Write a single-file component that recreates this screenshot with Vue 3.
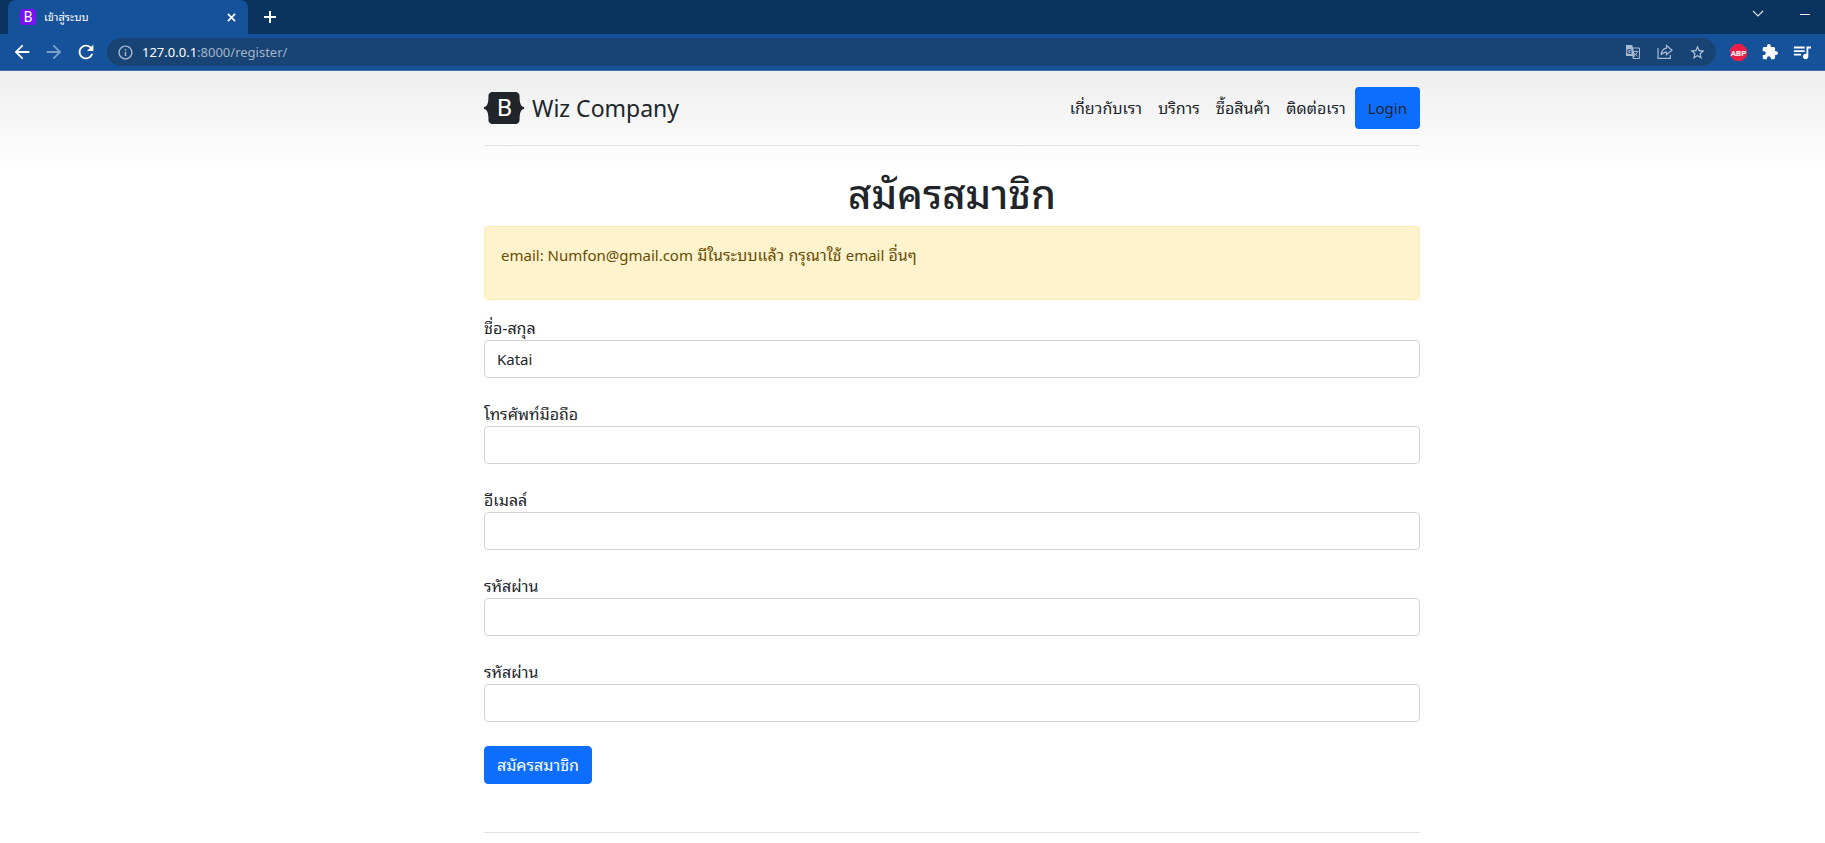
<script setup>
import { ref } from 'vue'

const links = ['เกี่ยวกับเรา', 'บริการ', 'ซื้อสินค้า', 'ติดต่อเรา']

const fields = ref([
  { id: 'name', label: 'ชื่อ-สกุล', type: 'text', value: 'Katai' },
  { id: 'phone', label: 'โทรศัพท์มือถือ', type: 'text', value: '' },
  { id: 'email', label: 'อีเมลล์', type: 'email', value: '' },
  { id: 'password', label: 'รหัสผ่าน', type: 'password', value: '' },
  { id: 'password2', label: 'รหัสผ่าน', type: 'password', value: '' },
])
</script>

<template>
  <div class="browser">
    <div class="tabstrip">
      <div class="tab">
        <span class="favicon">B</span>
        <span class="tab-title">เข้าสู่ระบบ</span>
        <button class="icon-btn close" aria-label="Close tab">
          <svg width="9" height="9" viewBox="0 0 10 10"><path d="M1 1l8 8M9 1l-8 8" stroke="#fff" stroke-width="1.8" /></svg>
        </button>
      </div>
      <button class="icon-btn new-tab" aria-label="New tab">
        <svg width="12" height="12" viewBox="0 0 12 12"><path d="M6 0v12M0 6h12" stroke="#fff" stroke-width="2" /></svg>
      </button>
      <div class="window-controls">
        <button class="icon-btn" aria-label="Search tabs">
          <svg width="12" height="8" viewBox="0 0 12 8"><path d="M1 1l5 5 5-5" fill="none" stroke="#dbe4ef" stroke-width="1.2" /></svg>
        </button>
        <button class="icon-btn" aria-label="Minimize">
          <svg width="10" height="8" viewBox="0 0 10 8"><path d="M0 4.5h10" stroke="#fff" /></svg>
        </button>
      </div>
    </div>

    <div class="toolbar">
      <div class="nav-buttons">
        <button class="icon-btn" aria-label="Back">
          <svg width="22" height="22" viewBox="0 0 24 24" fill="#fff"><path d="M20 11H7.830l5.590-5.590L12 4l-8 8 8 8 1.410-1.410L7.830 13H20v-2z" /></svg>
        </button>
        <button class="icon-btn" aria-label="Forward">
          <svg width="22" height="22" viewBox="0 0 24 24" fill="#7ba1cd"><path d="M12 4l-1.410 1.410L16.170 11H4v2h12.170l-5.580 5.590L12 20l8-8z" /></svg>
        </button>
        <button class="icon-btn" aria-label="Reload">
          <svg width="22" height="22" viewBox="0 0 24 24" fill="#fff"><path d="M17.650 6.350C16.200 4.900 14.210 4 12 4c-4.420 0-7.990 3.580-7.990 8s3.570 8 7.990 8c3.730 0 6.840-2.550 7.730-6h-2.080c-.820 2.330-3.040 4-5.650 4-3.310 0-6-2.690-6-6s2.690-6 6-6c1.660 0 3.140.690 4.220 1.780L13 11h7V4l-2.350 2.350z" /></svg>
        </button>
      </div>
      <div class="address">
        <svg width="17" height="17" viewBox="0 0 24 24" fill="#a9bbd0"><path d="M11 7h2v2h-2zm0 4h2v6h-2zm1-9C6.480 2 2 6.480 2 12s4.480 10 10 10 10-4.480 10-10S17.520 2 12 2zm0 18c-4.410 0-8-3.590-8-8s3.590-8 8-8 8 3.590 8 8-3.590 8-8 8z" /></svg>
        <span class="url"><b>127.0.0.1</b>:8000/register/</span>
        <div class="address-actions">
          <button class="icon-btn" aria-label="Translate">
            <svg width="16" height="16" viewBox="0 0 16 16">
              <path d="M7 4h7.500v10.500H8" fill="none" stroke="#a9bbd0" />
              <path d="M8.500 7.500h5M11 6.500v1M12.500 7.500c-.5 2-2 3.500-3.500 4.500M9.500 9l3 3.500" fill="none" stroke="#a9bbd0" stroke-width=".9" />
              <path d="M1 1h6.200l2.800 11H1z" fill="#a9bbd0" />
              <path d="M7.500 12v3l2.500-3z" fill="#a9bbd0" />
              <text x="1.500" y="9.500" class="translate-letter">G</text>
            </svg>
          </button>
          <button class="icon-btn" aria-label="Share">
            <svg width="16" height="16" viewBox="0 0 16 16" fill="none" stroke="#a9bbd0" stroke-width="1.200">
              <path d="M1 4v10.400h12.400V11" />
              <path d="M9.500 1.500l5.500 4.700-5.500 4.600V8.200C6.800 8.200 5.200 9.200 4 11c.3-3.600 2.200-6.400 5.500-6.900z" />
            </svg>
          </button>
          <button class="icon-btn" aria-label="Bookmark">
            <svg width="17" height="17" viewBox="0 0 24 24" fill="#b7c6d8"><path d="M22 9.240l-7.190-.620L12 2 9.190 8.630 2 9.240l5.460 4.730L5.820 21 12 17.270 18.180 21l-1.630-7.030L22 9.240zM12 15.400l-3.760 2.270 1-4.280-3.320-2.880 4.380-.380L12 6.100l1.710 4.040 4.380.380-3.320 2.880 1 4.280L12 15.400z" /></svg>
          </button>
        </div>
      </div>
      <div class="extensions">
        <button class="icon-btn abp" aria-label="Adblock Plus">
          <svg width="17" height="17" viewBox="0 0 17 17">
            <path d="M5 0h7l5 5v7l-5 5H5l-5-5V5z" fill="#ed1e45" />
            <text x="8.500" y="11.500" text-anchor="middle" class="abp-text">ABP</text>
          </svg>
        </button>
        <button class="icon-btn" aria-label="Extensions">
          <svg width="16" height="16" viewBox="1 1 22 22" fill="#fff"><path d="M20.500 11H19V7c0-1.100-.900-2-2-2h-4V3.500C13 2.120 11.880 1 10.500 1S8 2.120 8 3.500V5H4c-1.100 0-1.990.900-1.990 2v3.800H3.500c1.490 0 2.700 1.210 2.700 2.700s-1.210 2.700-2.700 2.700H2V20c0 1.100.900 2 2 2h3.800v-1.500c0-1.490 1.210-2.700 2.700-2.700s2.700 1.210 2.700 2.700V22H17c1.100 0 2-.900 2-2v-4h1.500c1.380 0 2.500-1.120 2.500-2.500S21.880 11 20.500 11z" /></svg>
        </button>
        <button class="icon-btn" aria-label="Media controls">
          <svg width="18" height="18" viewBox="2 2 20 20" fill="#fff"><path d="M15 6H3v2h12V6zm0 4H3v2h12v-2zM3 16h8v-2H3v2zM17 6v8.180c-.310-.110-.650-.180-1-.180-1.660 0-3 1.340-3 3s1.340 3 3 3 3-1.340 3-3V8h3V6h-5z" /></svg>
        </button>
      </div>
    </div>
  </div>

  <div class="page">
    <div class="container">
      <header class="header">
        <a href="#" class="brand">
          <svg width="40" height="32" viewBox="0 0 118 94" role="img" aria-label="Bootstrap">
            <path fill="#212529" d="M24.509 0c-6.733 0-11.715 5.893-11.492 12.284.214 6.140-.064 14.092-2.066 20.577C8.943 39.365 5.547 43.485 0 44.014v5.972c5.547.529 8.943 4.649 10.951 11.153 2.002 6.485 2.280 14.437 2.066 20.577C12.794 88.106 17.776 94 24.510 94H93.500c6.733 0 11.714-5.893 11.491-12.284-.214-6.140.064-14.092 2.066-20.577 2.009-6.504 5.396-10.624 10.943-11.153v-5.972c-5.547-.529-8.934-4.649-10.943-11.153-2.002-6.484-2.280-14.437-2.066-20.577C105.214 5.894 100.233 0 93.500 0H24.508z" />
            <text x="61" y="72" text-anchor="middle" class="brand-letter">B</text>
          </svg>
          <span class="brand-name">Wiz Company</span>
        </a>
        <nav class="nav">
          <div class="nav-links">
            <a v-for="link in links" :key="link" href="#">{{ link }}</a>
          </div>
          <a href="#" class="login">Login</a>
        </nav>
      </header>

      <main>
        <h1>สมัครสมาชิก</h1>
        <div class="alert" role="alert"><span class="latin">email: Numfon@gmail.com</span> มีในระบบแล้ว กรุณาใช้ <span class="latin">email</span> อื่นๆ</div>
        <form @submit.prevent>
          <div v-for="field in fields" :key="field.id" class="field">
            <label :for="field.id">{{ field.label }}</label>
            <input :id="field.id" v-model="field.value" :type="field.type" />
          </div>
          <button type="submit" class="submit">สมัครสมาชิก</button>
        </form>
      </main>
      <footer class="footer"></footer>
    </div>
  </div>
</template>

<style>
body {
  margin: 0;
  background: #fff;
  overflow: hidden;
}
</style>

<style scoped>
.browser,
.page {
  font-family: "Noto Sans", "Noto Sans Thai Looped", Loma, Waree, "Noto Sans Thai", sans-serif;
}
.icon-btn {
  display: flex;
  align-items: center;
  justify-content: center;
  padding: 0;
  border: 0;
  background: none;
}
.tabstrip {
  display: flex;
  align-items: center;
  height: 34px;
  padding: 0 15px 0 8px;
  background: #0b335f;
}
.tab {
  display: flex;
  align-items: center;
  gap: 8px;
  box-sizing: border-box;
  width: 240px;
  height: 34px;
  padding: 0 12px;
  border-radius: 8px 8px 0 0;
  background: #155299;
  color: #fff;
}
.favicon {
  width: 16px;
  height: 16px;
  border-radius: 3px;
  background: #7a12f5;
  font: 14px/16px Roboto, sans-serif;
  text-align: center;
}
.tab-title {
  flex: 1;
  font-size: 11px;
  line-height: 16px;
}
.close {
  width: 9px;
}
.new-tab {
  margin-left: 16px;
}
.window-controls {
  display: flex;
  gap: 36px;
  margin-left: auto;
  padding-bottom: 6px;
}
.toolbar {
  display: flex;
  align-items: center;
  gap: 10px;
  height: 36px;
  padding: 0 14px 0 11px;
  border-bottom: 1px solid #4470ab;
  background: #155299;
}
.nav-buttons {
  display: flex;
  gap: 10px;
}
.address {
  display: flex;
  flex: 1;
  align-items: center;
  gap: 8px;
  height: 28px;
  padding: 0 10px;
  border-radius: 14px;
  background: #184475;
}
.url {
  color: #a3b4c8;
  font-size: 13px;
  line-height: 20px;
}
.url b {
  color: #fff;
  font-weight: 400;
}
.address-actions {
  display: flex;
  gap: 16px;
  margin-left: auto;
}
.translate-letter {
  fill: #184475;
  font: bold 8px Roboto, sans-serif;
}
.extensions {
  display: flex;
  gap: 15px;
  padding-left: 4px;
}
.abp-text {
  fill: #fff;
  font: bold 8px Roboto, sans-serif;
}
.page {
  padding-left: 79px;
  background: linear-gradient(180deg, #eee, #fff 100px);
  color: #212529;
  font-size: 16px;
  line-height: 24px;
}
.container {
  max-width: 936px;
  margin: 0 auto;
  padding: 16px 12px;
}
.header {
  display: flex;
  align-items: center;
  justify-content: space-between;
  padding-bottom: 16px;
  border-bottom: 1px solid #dee2e6;
}
.brand {
  display: flex;
  align-items: center;
  gap: 8px;
  color: #212529;
  text-decoration: none;
}
.brand-letter {
  fill: #fff;
  font: 400 72px Roboto, sans-serif;
}
.brand-name {
  font-size: 23px;
  line-height: 36px;
}
.nav {
  display: flex;
  align-items: center;
  gap: 9px;
}
.nav-links {
  display: flex;
  gap: 16px;
}
.nav-links a {
  color: #212529;
  text-decoration: none;
}
.login {
  padding: 9px 13px;
  border-radius: 4px;
  background: #0d6efd;
  color: #212529;
  font-size: 15px;
  text-decoration: none;
}
h1 {
  margin: 24px 0 8px;
  font-size: 40px;
  font-weight: 500;
  line-height: 48px;
  text-align: center;
}
.alert {
  margin-bottom: 16px;
  padding: 16px 16px 32px;
  border: 1px solid #ffecb5;
  border-radius: 4px;
  background: #fff3cd;
  color: #664d03;
}
.latin {
  font-size: 15px;
}
.field {
  margin-bottom: 24px;
}
label {
  display: block;
}
input {
  display: block;
  box-sizing: border-box;
  width: 100%;
  height: 38px;
  padding: 6px 12px;
  border: 1px solid #ced4da;
  border-radius: 4px;
  background: #fff;
  color: #212529;
  font: inherit;
  font-size: 15px;
}
.submit {
  display: block;
  padding: 6px 12px;
  border: 1px solid #0d6efd;
  border-radius: 4px;
  background: #0d6efd;
  color: #fff;
  font: inherit;
}
.footer {
  margin-top: 48px;
  border-top: 1px solid #dee2e6;
}
</style>
